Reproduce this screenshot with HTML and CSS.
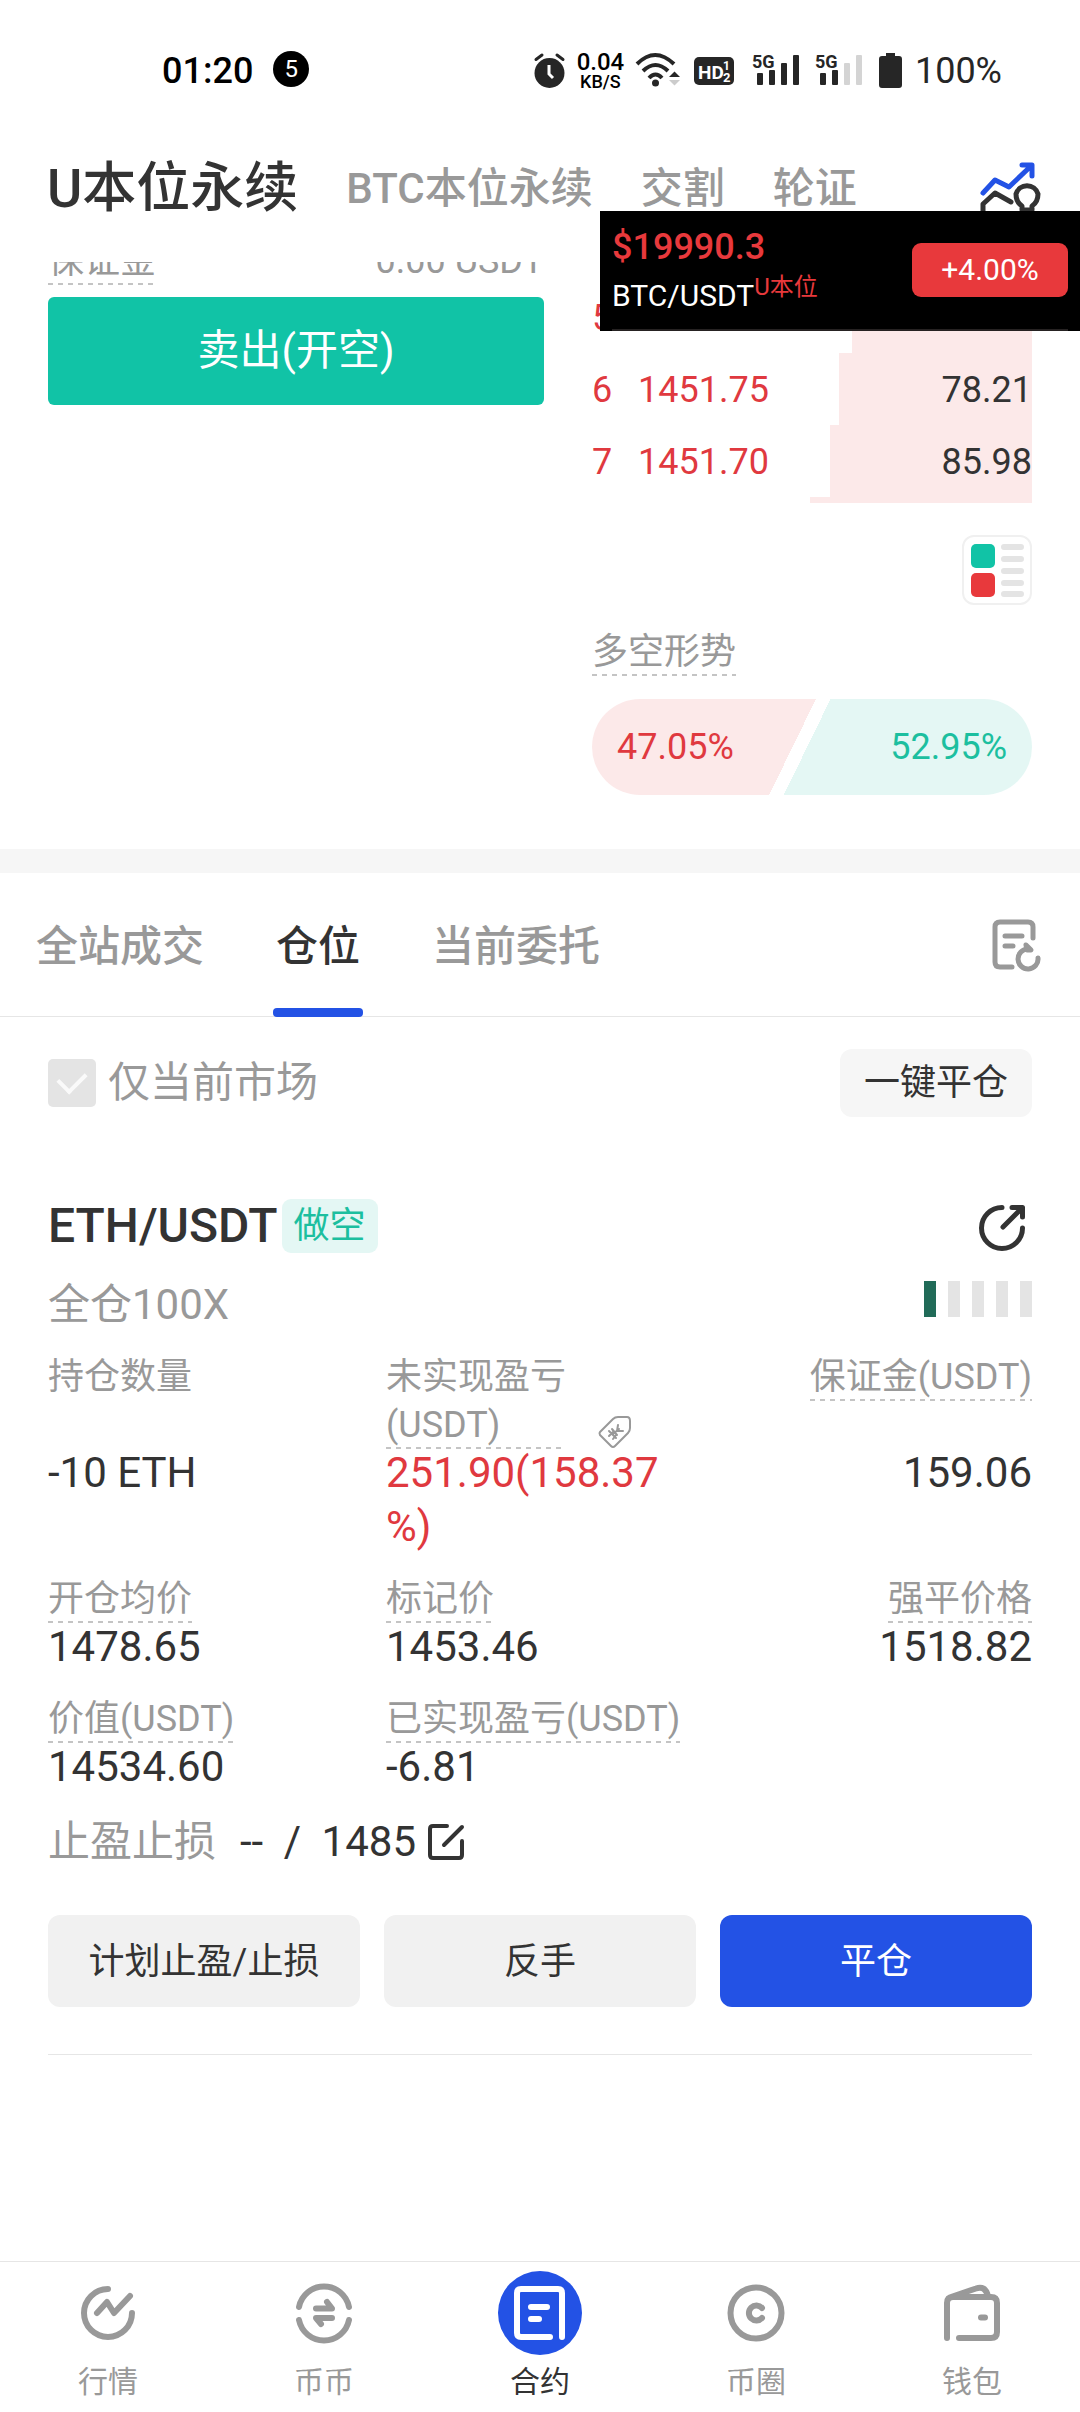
FILE: index.html
```html
<!DOCTYPE html>
<html lang="zh-CN">
<head>
<meta charset="utf-8">
<meta name="viewport" content="width=device-width">
<title>U本位永续</title>
<link rel="stylesheet" href="styles.css">
</head>
<body>
<div class="status">
  <span class="status-time">01:20</span>
  <span class="status-count">5</span>
  <div class="status-icons">
    <svg width="31" height="36" viewBox="0 0 31 36"><circle cx="15.500" cy="20" r="15" fill="#262626"/><path d="M2 6.500L8 2M29 6.500L23 2" stroke="#262626" stroke-width="3" stroke-linecap="round"/><path d="M15 12v9l4 4" fill="none" stroke="#fff" stroke-width="3"/></svg>
    <span class="net"><span>0.04</span><small>KB/S</small></span>
    <svg width="46" height="36" viewBox="0 0 46 36"><g fill="none" stroke="#262626" stroke-width="4"><path d="M1 11Q19 -7 38 11"/><path d="M7 18Q19.500 6 32 18"/><path d="M13 25Q19.500 18 26 25"/></g><circle cx="19.500" cy="30" r="3.500" fill="#262626"/><path d="M33 24l5.500-5.500L44 24z" fill="#262626"/><path d="M33 27l5.500 5.500L44 27z" fill="#ccc"/></svg>
    <svg width="50" height="36" viewBox="0 0 50 36"><rect x="2" y="4" width="40" height="28" rx="5" fill="#262626"/><g fill="#fff" font-family="Roboto, sans-serif" font-weight="700"><text x="6" y="26" font-size="19">HD</text><text x="31" y="17" font-size="12">1</text><text x="31" y="29" font-size="13">2</text></g></svg>
    <svg width="52" height="36" viewBox="0 0 52 36"><text x="0" y="15" font-family="Roboto, sans-serif" font-weight="700" font-size="18" fill="#262626">5G</text><g fill="#262626"><rect x="5" y="20" width="6" height="12" rx="1"/><rect x="17" y="17" width="6" height="15" rx="1"/><rect x="29" y="10" width="6" height="22" rx="1"/><rect x="41" y="2" width="6" height="30" rx="1"/></g></svg>
    <svg width="53" height="36" viewBox="0 0 53 36"><text x="1" y="15" font-family="Roboto, sans-serif" font-weight="700" font-size="18" fill="#262626">5G</text><g fill="#262626"><rect x="6" y="20" width="6" height="12" rx="1"/><rect x="18" y="17" width="6" height="15" rx="1"/></g><g fill="#d4d4d4"><rect x="30" y="10" width="6" height="22" rx="1"/><rect x="42" y="2" width="6" height="30" rx="1"/></g></svg>
    <svg width="28" height="36" viewBox="0 0 28 36"><path d="M9 0h9v3h4q3 0 3 3v26q0 3-3 3H5q-3 0-3-3V6q0-3 3-3h4z" fill="#262626"/></svg>
    <span class="status-battery">100%</span>
  </div>
</div>

<header class="header">
  <nav class="markets">
    <a href="#usdt" class="market market-on">U本位永续</a>
    <a href="#btc" class="market">BTC本位永续</a>
    <a href="#delivery" class="market">交割</a>
    <a href="#warrant" class="market">轮证</a>
  </nav>
  <button class="icon-button" aria-label="行情分析">
    <svg width="60" height="54" viewBox="0 0 60 54" fill="none" stroke-width="5" stroke-linecap="round" stroke-linejoin="round"><path d="M3 31L15 18L29 25L51 4M42 3H52V14" stroke="#2352e5"/><path d="M3 50V42L15 31L31 40M42 48V44Q36 40 36 32A11.500 11.500 0 0 1 58 32Q58 40 52 44V48Z" stroke="#333"/></svg>
  </button>
</header>

<aside class="ticker">
  <div class="ticker-body">
    <div class="ticker-info">
      <strong class="ticker-price">$19990.3</strong>
      <span class="ticker-pair">BTC/USDT<span class="ticker-kind">U本位</span></span>
    </div>
    <span class="ticker-change">+4.00%</span>
  </div>
</aside>

<section class="trade">
  <div class="order">
    <div class="margin-row"><span class="hint">保证金</span><span>0.00 USDT</span></div>
    <button class="sell">卖出(开空)</button>
  </div>
  <div class="book">
    <ol class="levels">
      <li class="level"><span class="depth" style="width:180px"></span><span class="rank">5</span></li>
      <li class="level"><span class="depth" style="width:193px"></span><span class="rank">6</span><span class="price">1451.75</span><span class="amount">78.21</span></li>
      <li class="level"><span class="depth" style="width:202px"></span><span class="rank">7</span><span class="price">1451.70</span><span class="amount">85.98</span></li>
      <li class="level level-cut"><span class="depth" style="width:222px"></span></li>
    </ol>
    <button class="book-mode" aria-label="盘口样式">
      <svg width="70" height="70" viewBox="0 0 70 70"><rect x="1" y="1" width="68" height="68" rx="11" fill="#fff" stroke="#f0f0f0" stroke-width="2"/><rect x="9" y="9" width="24" height="24" rx="5" fill="#11c3a6"/><rect x="9" y="38" width="24" height="24" rx="5" fill="#e8393c"/><path d="M42 12H59M42 24H59M42 36H59M42 48H59M42 59H59" stroke="#e4e4e4" stroke-width="6" stroke-linecap="round"/></svg>
    </button>
    <span class="hint trend-label">多空形势</span>
    <div class="trend"><span class="trend-long">47.05%</span><span class="trend-short">52.95%</span></div>
  </div>
</section>

<main class="panel">
  <div class="tabs">
    <a href="#deals" class="tab">全站成交</a>
    <a href="#positions" class="tab tab-on">仓位</a>
    <a href="#orders" class="tab">当前委托</a>
    <button class="icon-button tabs-history" aria-label="历史记录">
      <svg width="48" height="56" viewBox="0 0 48 56" fill="none" stroke="#999" stroke-width="5" stroke-linecap="round" stroke-linejoin="round"><path d="M20 50H8Q3 50 3 45V10Q3 5 8 5H36Q41 5 41 10V21M13 19H30M13 29H21M36 32A10 10 0 1 0 46 41"/><path d="M34 28L39 33H35Z"/></svg>
    </button>
  </div>

  <div class="filter">
    <label class="only"><input type="checkbox" class="tick" checked>仅当前市场</label>
    <button class="close-all">一键平仓</button>
  </div>

  <article class="position">
    <div class="title-row">
      <h2 class="symbol">ETH/USDT</h2><span class="side">做空</span>
      <button class="icon-button share" aria-label="分享">
        <svg width="54" height="54" viewBox="0 0 54 54" fill="none" stroke="#333" stroke-width="5" stroke-linecap="round" stroke-linejoin="round"><path d="M24 8.500A20.500 20.500 0 1 0 44.500 29M25 28L44 9M34 8.500H44.500V18"/></svg>
      </button>
    </div>
    <div class="lever-row">
      <span>全仓100X</span>
      <div class="risk"><i class="risk-on"></i><i></i><i></i><i></i><i></i></div>
    </div>
    <dl class="facts">
      <div class="fact"><dt>持仓数量</dt><dd>-10 ETH</dd></div>
      <div class="fact"><dt class="dt-tagged"><span class="hint">未实现盈亏(USDT)</span>
        <svg width="34" height="34" viewBox="0 0 34 34" fill="none" stroke="#999" stroke-width="2" stroke-linecap="round" stroke-linejoin="round"><path d="M2 17L15 4Q17 2 20 2H29Q32 2 32 6V13Q32 16 30 18L17 31Q15 33 13 31L2 20Q1 18 2 17Z"/><path d="M11 16L18 23M20 10L19 16L25 16M15 19L21 14M14 14L19 20M11 21L15 17M15 24L18 20"/></svg></dt><dd class="up">251.90(158.37%)</dd></div>
      <div class="fact"><dt><span class="hint">保证金(USDT)</span></dt><dd>159.06</dd></div>
      <div class="fact"><dt><span class="hint">开仓均价</span></dt><dd>1478.65</dd></div>
      <div class="fact"><dt><span class="hint">标记价</span></dt><dd>1453.46</dd></div>
      <div class="fact"><dt><span class="hint">强平价格</span></dt><dd>1518.82</dd></div>
      <div class="fact"><dt><span class="hint">价值(USDT)</span></dt><dd>14534.60</dd></div>
      <div class="fact"><dt><span class="hint">已实现盈亏(USDT)</span></dt><dd>-6.81</dd></div>
    </dl>
    <div class="stop-row">
      <span class="stop-label">止盈止损</span>
      <span class="stop-value"><span>--</span> <span>/</span> <span>1485</span></span>
      <button class="icon-button edit" aria-label="编辑止盈止损">
        <svg width="38" height="38" viewBox="0 0 38 38" fill="none" stroke="#333" stroke-width="4" stroke-linecap="round" stroke-linejoin="round"><path d="M20 3H6Q3 3 3 6V32Q3 35 6 35H32Q35 35 35 32V18M17 22L35 4"/></svg>
      </button>
    </div>
    <div class="actions">
      <button class="action">计划止盈/止损</button>
      <button class="action">反手</button>
      <button class="action action-main">平仓</button>
    </div>
  </article>
</main>

<nav class="dock">
  <a href="#quotes" class="dock-item">
    <svg width="84" height="84" viewBox="0 0 84 84" class="dock-icon"><path d="M42 18A24 24 0 1 0 66 42M31 42L41 31L48 42L64 25"/></svg>行情</a>
  <a href="#spot" class="dock-item">
    <svg width="84" height="84" viewBox="0 0 84 84" class="dock-icon"><path d="M17 36A25.500 25.500 0 0 1 67 36M17 49A25.500 25.500 0 0 0 67 49M34 37.500H50L45 31M50 47H34L39 53"/></svg>币币</a>
  <a href="#contract" class="dock-item dock-on">
    <svg width="84" height="84" viewBox="0 0 84 84" class="dock-icon"><circle cx="42" cy="42" r="42" fill="#2352e5" stroke="none"/><path stroke="#fff" d="M64 66V22Q64 18 60 18H23Q19 18 19 22V62Q19 66 23 66H52M33 36H49M33 48H41"/></svg>合约</a>
  <a href="#circle" class="dock-item">
    <svg width="84" height="84" viewBox="0 0 84 84" class="dock-icon"><circle cx="42" cy="42" r="25.500"/><path d="M48 37A7.500 7.500 0 1 0 48 47"/></svg>币圈</a>
  <a href="#wallet" class="dock-item">
    <svg width="84" height="84" viewBox="0 0 84 84" class="dock-icon"><path d="M17 67V32Q17 26 23 26H61Q67 26 67 32V61Q67 67 61 67H29M21 26L46 17.500Q55 14 58 25M51 46.500H55"/></svg>钱包</a>
</nav>
</body>
</html>
```
FILE: styles.css
```css
* { box-sizing: border-box; }

body {
  position: relative;
  display: flex;
  flex-direction: column;
  min-height: 100vh;
  margin: 0;
  background: #fff;
  color: #333;
  font-family: Roboto, "Noto Sans CJK SC", sans-serif;
  font-size: 36px;
  line-height: 48px;
}

button {
  padding: 0;
  border: 0;
  background: none;
  color: inherit;
  font: inherit;
}

a { color: inherit; text-decoration: none; }
svg { display: block; flex: none; overflow: visible; }
.icon-button { display: block; }

/* status bar */
.status {
  display: flex;
  align-items: center;
  height: 140px;
  padding: 2px 78px 0 162px;
  color: #000;
}
.status-time { font-weight: 500; }
.status-count {
  width: 36px;
  height: 36px;
  margin: 0 0 4px 20px;
  border-radius: 50%;
  background: #000;
  color: #fff;
  font-size: 24px;
  line-height: 36px;
  text-align: center;
}
.status-icons {
  display: flex;
  align-items: center;
  gap: 10px;
  margin-left: auto;
}
.net {
  display: flex;
  flex-direction: column;
  align-items: center;
  width: 51px;
  font-size: 24px;
  font-weight: 500;
  line-height: 22px;
}
.net small { font-size: 18px; line-height: 18px; }
.status-battery { color: #262626; }

/* market switch */
.header {
  display: flex;
  align-items: center;
  justify-content: space-between;
  height: 122px;
  padding: 0 40px 24px 47px;
}
.markets { display: flex; align-items: center; gap: 48px; }
.market { color: #999; font-size: 42px; font-weight: 500; }
.market-on { color: #333; font-size: 54px; line-height: 54px; }

/* floating quote window */
.ticker {
  position: absolute;
  z-index: 1;
  top: 211px;
  right: 0;
  width: 480px;
  height: 120px;
  padding: 0 12px;
  background: #000;
}
.ticker-body {
  display: flex;
  align-items: center;
  justify-content: space-between;
  height: 120px;
  border-bottom: 2px solid #262222;
}
.ticker-info { display: flex; flex-direction: column; gap: 1px; padding-top: 3px; }
.ticker-price { color: #e8393c; font-weight: 500; }
.ticker-pair { color: #fff; font-size: 30px; }
.ticker-kind { color: #e8393c; font-size: 24px; vertical-align: 11px; line-height: 24px; }
.ticker-change {
  width: 156px;
  border-radius: 9px;
  background: #e8393c;
  color: #fff;
  font-size: 30px;
  line-height: 54px;
  text-align: center;
}

/* labels with a dashed underline */
.hint {
  display: inline-block;
  background: repeating-linear-gradient(90deg, #c4c4c4 0 5px, transparent 5px 10px) bottom / 100% 2px no-repeat;
}

/* order form and order book */
.trade {
  display: grid;
  grid-template-columns: 496fr 440fr;
  gap: 48px;
  overflow: hidden;
  padding: 0 48px 54px;
  border-bottom: 24px solid #f6f6f6;
}
.margin-row {
  display: flex;
  justify-content: space-between;
  margin-top: -25px;
  color: #999;
}
.sell {
  width: 100%;
  height: 108px;
  margin-top: 12px;
  border-radius: 6px;
  background: #11c3a6;
  color: #fff;
  font-size: 42px;
}
.book { display: flex; flex-direction: column; padding-top: 19px; }
.levels { margin: 0; padding: 0; list-style: none; }
.level {
  position: relative;
  display: flex;
  height: 72px;
  line-height: 75px;
}
.level-cut { height: 6px; }
.depth {
  position: absolute;
  top: 0;
  right: 0;
  bottom: 0;
  z-index: -1;
  background: #fce9e9;
}
.rank { width: 46px; color: #e0393f; }
.price { color: #e0393f; }
.amount { margin-left: auto; }
.book-mode { align-self: flex-end; margin-top: 32px; }
.trend-label { align-self: flex-start; margin-top: 23px; color: #999; }
.trend {
  display: flex;
  align-items: center;
  justify-content: space-between;
  height: 96px;
  margin-top: 23px;
  padding: 0 25px;
  border-radius: 48px;
  background: linear-gradient(116deg, #fce9e9 0 46%, #fff 46% 49%, #e4f7f4 49%);
}
.trend-long { color: #e0393f; }
.trend-short { color: #1cbf9f; }

/* tabs */
.tabs {
  display: flex;
  align-items: center;
  gap: 72px;
  height: 144px;
  padding: 0 40px 0 36px;
  border-bottom: 1px solid #e6e6e6;
}
.tab {
  position: relative;
  padding-top: 3px;
  color: #999;
  font-size: 42px;
  font-weight: 500;
  line-height: 141px;
}
.tab-on { color: #333; }
.tab-on::after {
  content: "";
  position: absolute;
  right: -3px;
  bottom: 0;
  left: -3px;
  height: 9px;
  border-radius: 4px;
  background: #2352e5;
}
.tabs-history { margin-left: auto; }

.filter {
  display: flex;
  align-items: center;
  justify-content: space-between;
  padding: 32px 48px 0;
}
.only {
  display: flex;
  align-items: center;
  gap: 12px;
  color: #999;
  font-size: 42px;
}
.tick {
  display: grid;
  place-items: center;
  width: 48px;
  height: 48px;
  margin: 0;
  border-radius: 5px;
  background: #e4e4e4;
  appearance: none;
}
.tick::after {
  content: "";
  width: 14px;
  height: 22px;
  margin-bottom: 8px;
  border: solid #fafafa;
  border-width: 0 4px 4px 0;
  transform: rotate(45deg);
}
.close-all {
  height: 68px;
  padding: 0 24px;
  border-radius: 12px;
  background: #f6f6f6;
}

/* position card */
.position {
  margin: 82px 48px 0;
  padding-bottom: 47px;
  border-bottom: 1px solid #e6e6e6;
}
.title-row { display: flex; align-items: center; gap: 4px; }
.symbol { margin: 0; font-size: 48px; font-weight: 500; line-height: 54px; }
.side {
  padding: 0 12px;
  border-radius: 9px;
  background: #e4f7f4;
  color: #1cbf9f;
  line-height: 54px;
}
.share { margin-left: auto; }
.lever-row {
  display: flex;
  justify-content: space-between;
  margin-top: 25px;
  color: #999;
  font-size: 42px;
  line-height: 54px;
}
.risk { display: flex; gap: 12px; padding-top: 3px; }
.risk i { width: 12px; height: 36px; background: #e4e4e4; }
.risk .risk-on { background: #216b58; }

.facts {
  display: grid;
  grid-template-columns: 338fr 308fr 338fr;
  margin: 21px 0 0;
}
.fact {
  display: grid;
  grid-row: span 2;
  grid-template-rows: subgrid;
  padding-bottom: 21px;
}
.fact:nth-child(3n) { text-align: right; }
.fact dt { height: fit-content; color: #999; }
.fact dd {
  margin: -3px 0 0;
  padding-right: 12px;
  font-size: 42px;
  line-height: 54px;
  line-break: anywhere;
}
.fact:nth-child(3n) dd { padding-right: 0; }
.fact .up { color: #e0393f; }
.dt-tagged { display: flex; align-items: flex-end; gap: 32px; }
.dt-tagged .hint { width: 180px; }

.stop-row {
  display: flex;
  align-items: center;
  font-size: 42px;
  line-height: 54px;
}
.stop-label { margin-right: 24px; color: #999; }
.stop-value { display: flex; justify-content: space-between; min-width: 176px; }
.edit { margin-left: 11px; }

.actions {
  display: grid;
  grid-template-columns: repeat(3, 1fr);
  gap: 24px;
  margin-top: 46px;
}
.action {
  height: 92px;
  padding-top: 2px;
  border-radius: 12px;
  background: #f1f1f1;
}
.action-main { background: #2352e5; color: #fff; }

/* bottom navigation */
.dock {
  display: grid;
  grid-template-columns: repeat(5, 1fr);
  margin-top: auto;
  padding: 9px 0;
  border-top: 1px solid #e6e6e6;
}
.dock-item {
  display: flex;
  flex-direction: column;
  align-items: center;
  gap: 6px;
  color: #999;
  font-size: 30px;
  line-height: 42px;
}
.dock-icon {
  fill: none;
  stroke: #999;
  stroke-width: 6px;
  stroke-linecap: round;
  stroke-linejoin: round;
}
.dock-on { color: #333; }
```
